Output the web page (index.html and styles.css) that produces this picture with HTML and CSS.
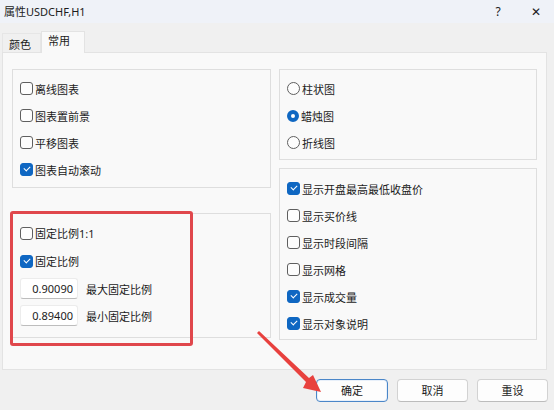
FILE: index.html
```html
<!DOCTYPE html>
<html lang="zh">
<head>
<meta charset="utf-8">
<title>属性USDCHF,H1</title>
<link rel="stylesheet" href="styles.css">
</head>
<body>
<div class="window">
  <div class="titlebar">
    <span class="title">属性USDCHF,H1</span>
    <span class="tb-btns"><span class="help">?</span><span class="close">✕</span></span>
  </div>
  <div class="tabs">
    <div class="tab">颜色</div>
    <div class="tab active">常用</div>
  </div>
  <div class="panel">
    <div class="col">
      <div class="group g1">
        <div class="row"><span class="cb"></span>离线图表</div>
        <div class="row"><span class="cb"></span>图表置前景</div>
        <div class="row"><span class="cb"></span>平移图表</div>
        <div class="row"><span class="cb on"></span>图表自动滚动</div>
      </div>
      <div class="group g2">
        <div class="row r28"><span class="cb"></span>固定比例1:1</div>
        <div class="row r28"><span class="cb on"></span>固定比例</div>
        <div class="row"><span class="input">0.90090</span><span class="lbl">最大固定比例</span></div>
        <div class="row"><span class="input">0.89400</span><span class="lbl">最小固定比例</span></div>
      </div>
    </div>
    <div class="col">
      <div class="group g3">
        <div class="row"><span class="rb"></span>柱状图</div>
        <div class="row"><span class="rb on"></span>蜡烛图</div>
        <div class="row"><span class="rb"></span>折线图</div>
      </div>
      <div class="group g4">
        <div class="row"><span class="cb on"></span>显示开盘最高最低收盘价</div>
        <div class="row"><span class="cb"></span>显示买价线</div>
        <div class="row"><span class="cb"></span>显示时段间隔</div>
        <div class="row"><span class="cb"></span>显示网格</div>
        <div class="row"><span class="cb on"></span>显示成交量</div>
        <div class="row"><span class="cb on"></span>显示对象说明</div>
      </div>
    </div>
  </div>
  <div class="buttons">
    <div class="btn primary">确定</div>
    <div class="btn">取消</div>
    <div class="btn">重设</div>
  </div>
  <div class="highlight"></div>
  <svg class="arrow" width="554" height="410" viewBox="0 0 554 410">
    <polygon points="257,333 259,331 309,378 313,375 321,392 303,388 306,382" fill="#e8413e"/>
  </svg>
</div>
</body>
</html>
```
FILE: styles.css
```css
html, body {
  margin: 0;
  padding: 0;
}
body {
  width: 554px;
  height: 410px;
  background: #f0f0f0;
  font-family: "Noto Sans", "Noto Sans CJK SC", sans-serif;
  font-size: 11px;
  color: #1b1b1b;
  overflow: hidden;
}
.window {
  position: relative;
  width: 554px;
  height: 410px;
}
.titlebar {
  height: 23px;
  background: #eff2f8;
  display: flex;
  align-items: center;
  justify-content: space-between;
  padding: 0 0 0 4px;
}
.title {
  font-size: 11px;
  line-height: 23px;
}
.tb-btns {
  display: flex;
  align-items: center;
}
.help {
  width: 40px;
  text-align: center;
  font-size: 12px;
  margin-right: 0px;
}
.close {
  width: 36px;
  text-align: center;
  font-size: 12px;
}
.tabs {
  display: flex;
  align-items: flex-end;
  height: 29px;
  padding-left: 2px;
}
.tab {
  height: 19px;
  width: 39px;
  box-sizing: border-box;
  padding-left: 6px;
  line-height: 21px;
  border: 1px solid #e6e6e6;
  border-bottom: none;
  background: #f0f0f0;
}
.tab.active {
  height: 22px;
  width: 44px;
  padding-left: 6px;
  line-height: 18px;
  background: #f9f9f9;
  border-color: #e3e3e3;
  margin-bottom: -1px;
  position: relative;
  z-index: 1;
}
.panel {
  margin-left: 2px;
  width: 545px;
  height: 318px;
  box-sizing: border-box;
  background: #f9f9f9;
  border: 1px solid #e3e3e3;
  display: flex;
  gap: 8px;
  padding: 16px 0 0 9px;
}
.col {
  display: flex;
  flex-direction: column;
}
.col:first-child { width: 259px; gap: 25px; }
.col:last-child { width: 258px; gap: 8px; }
.group {
  box-sizing: border-box;
  border: 1px solid #dedede;
  background: #f9f9f9;
  padding: 5px 7px 0 7px;
}
.g1 { height: 119px; }
.g2 { height: 125px; padding-top: 5px; }
.g3 { height: 91px; }
.g4 { height: 172px; padding-top: 6px; }
.row {
  height: 27px;
  display: flex;
  align-items: center;
  white-space: nowrap;
}
.row.r28 { height: 28px; }
.cb {
  width: 11px;
  height: 11px;
  border: 1px solid #5f5f5f;
  border-radius: 3px;
  margin-right: 2px;
  box-sizing: content-box;
  background: #fdfdfd;
  flex: none;
  position: relative;
}
.cb.on {
  background: #0f67c2;
  border-color: #0f67c2;
}
.cb.on::after {
  content: "";
  position: absolute;
  left: 3px;
  top: 2px;
  width: 5px;
  height: 3px;
  border-left: 1px solid #fff;
  border-bottom: 1px solid #fff;
  transform: rotate(-45deg);
}
.rb {
  width: 11px;
  height: 11px;
  border: 1px solid #5f5f5f;
  border-radius: 50%;
  margin-right: 2px;
  background: #fdfdfd;
  flex: none;
  box-sizing: content-box;
}
.rb.on {
  background: #fff;
  border: 4px solid #0f67c2;
  width: 4px;
  height: 4px;
}
.input {
  width: 58px;
  height: 21px;
  box-sizing: border-box;
  background: #ffffff;
  border: 1px solid #ececec;
  border-bottom-color: #bdbdbd;
  border-radius: 3px;
  text-align: right;
  padding-right: 4px;
  line-height: 19px;
  font-size: 11px;
}
.lbl {
  margin-left: 8px;
}
.buttons {
  display: flex;
  justify-content: flex-end;
  gap: 9px;
  padding: 9px 6px 0 0;
}
.btn {
  width: 71px;
  height: 23px;
  box-sizing: border-box;
  border: 1px solid #d2d2d2;
  border-bottom-color: #bcbcbc;
  border-radius: 4px;
  background: #fdfdfd;
  text-align: center;
  line-height: 21px;
}
.btn.primary {
  width: 72px;
  border: 1px solid #4a86c8;
  box-shadow: inset 0 0 0 1px #e8f0fa;
}
.highlight {
  position: absolute;
  left: 10px;
  top: 211px;
  width: 183px;
  height: 135px;
  box-sizing: border-box;
  border: 3px solid #e0474c;
  border-radius: 3px;
}
.arrow {
  position: absolute;
  left: 0;
  top: 0;
}
```
